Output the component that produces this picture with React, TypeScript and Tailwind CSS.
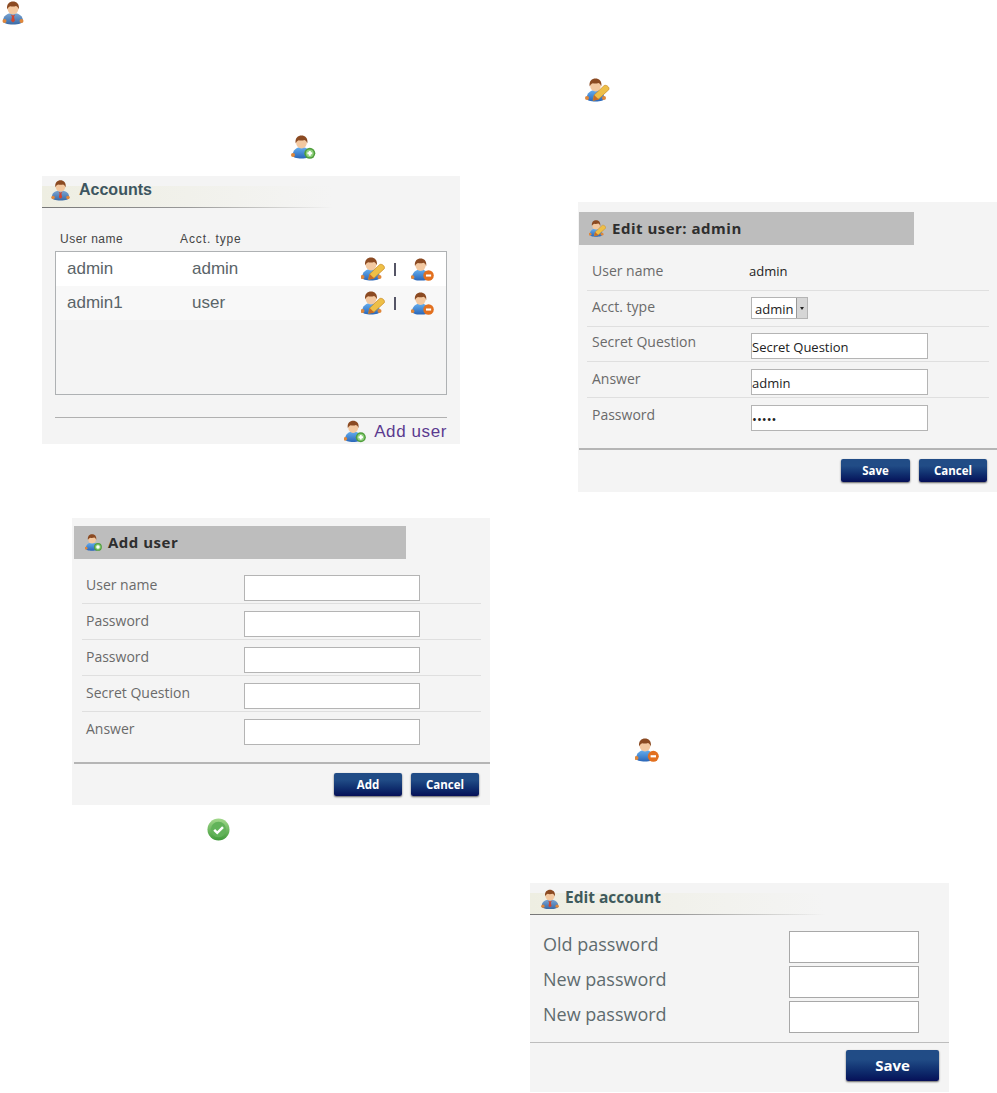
import React from "react";

type Kind = "suit" | "add" | "del" | "edit";

function UserIcon({ kind, className }: { kind: Kind; className: string }) {
  const gid = `body-${kind}`;
  const suit = kind === "suit";
  const hx = suit ? 12 : 10;
  return (
    <svg viewBox="0 0 24 24" className={className}>
      <defs>
        <linearGradient id={gid} x1="0" y1="0" x2="0" y2="1">
          <stop offset="0" stopColor={suit ? "#7ba6d4" : "#66b0f0"} />
          <stop offset="1" stopColor={suit ? "#3a6aa6" : "#2a66b8"} />
        </linearGradient>
      </defs>
      {suit ? (
        <path d="M2 20C2 15 6 12 12 12s10 3 10 8c0 2-4 3.500-10 3.500S2 22 2 20z" fill={`url(#${gid})`} />
      ) : (
        <path d="M1 20c.5-5 4-8 9-8s8.500 3 9 8c0 2.500-4 3.500-9 3.500S1 22.500 1 20z" fill={`url(#${gid})`} />
      )}
      <circle cx={hx - 8.500} cy="20" r="2" fill="#e0873a" />
      <circle cx={hx + 8.500} cy="20" r="2" fill="#e0873a" />
      <ellipse cx={hx} cy="7.500" rx="5.400" ry="6" fill="#f3c8a0" />
      <path
        d="M-5.800 8.500C-6.800 2.800-3.400.4 0 .4s6.800 2.400 5.800 8.100c-.5-2-1.500-3.100-2.800-3.500-1.900.7-4.200.7-5.700.2-1.500.7-2.600 1.600-3.100 3.300z"
        transform={`translate(${hx} 0)`}
        fill="#8b4a22"
      />
      {suit && <path d="M9.800 13.500l2.200 1 2.200-1-1.200 2.300.9 4-1.900 1.600-1.900-1.600.9-4z" fill="#d2452f" />}
      {kind === "add" && (
        <g>
          <circle cx="18.300" cy="18.300" r="5.500" fill="#4f9e3c" />
          <circle cx="18.300" cy="18.300" r="3.900" fill="#8fd07c" />
          <path d="M15.900 18.300h4.800M18.300 15.900v4.800" stroke="#fff" strokeWidth="2" />
        </g>
      )}
      {kind === "del" && (
        <g>
          <circle cx="18.300" cy="18.300" r="5.500" fill="#e2701f" />
          <path d="M15.600 18.300h5.400" stroke="#fff" strokeWidth="2.200" />
        </g>
      )}
      {kind === "edit" && (
        <g>
          <path d="M7.500 22.500l1.200-5.500 9.800-9.300c1.800-1.500 6 1.300 4.800 4l-9.800 9z" fill="#eebf47" stroke="#c98a25" strokeWidth="0.700" />
          <path d="M7.500 22.500l1.200-5.500 4.800 4.700z" fill="#c76b26" />
        </g>
      )}
    </svg>
  );
}

function CheckIcon() {
  return (
    <svg viewBox="0 0 24 24" className="w-[23px] h-[23px] block">
      <defs>
        <linearGradient id="okg" x1="0" y1="0" x2="0" y2="1">
          <stop offset="0" stopColor="#a3d98c" />
          <stop offset="1" stopColor="#3f9a3a" />
        </linearGradient>
      </defs>
      <circle cx="12" cy="12" r="11.500" fill="url(#okg)" />
      <circle cx="12" cy="12" r="8" fill="#62b35a" />
      <path d="M7.500 12.300l3.200 3.200 6-6" fill="none" stroke="#fff" strokeWidth="2.600" />
    </svg>
  );
}

function NavyButton({ label, className }: { label: string; className: string }) {
  return (
    <button className={`rounded-[2px] bg-gradient-to-b from-[#214c86] from-30% to-[#070f58] text-white font-bold shadow-[0_1px_2px_rgba(0,0,0,0.6)] ${className}`}>
      {label}
    </button>
  );
}

function GrayHeader({ kind, title, className }: { kind: Kind; title: string; className: string }) {
  return (
    <div className={`h-[33px] bg-[#bdbdbd] flex items-center ${className}`}>
      <UserIcon kind={kind} className="w-[17px] h-[17px] shrink-0" />
      <span className="ml-[6px] text-[15px] font-bold text-[#2e2e2e] tracking-[0.5px]">{title}</span>
    </div>
  );
}

function GlossHeader({ title, heightClass, lineClass, iconClass, textClass }: { title: string; heightClass: string; lineClass: string; iconClass: string; textClass: string }) {
  return (
    <div className={`relative flex items-center ${heightClass}`}>
      <div className={`absolute left-0 bottom-0 top-[10px] bg-gradient-to-r from-[#eeeee2] to-transparent ${lineClass}`} />
      <div className={`absolute left-0 bottom-0 h-px bg-gradient-to-r from-[#777] via-[#999] to-transparent ${lineClass}`} />
      <UserIcon kind="suit" className={`relative shrink-0 ${iconClass}`} />
      <span className={`relative font-bold text-[#3d5560] ${textClass}`}>{title}</span>
    </div>
  );
}

function FormRow({ label, children, last, height, inset }: { label: string; children: React.ReactNode; last?: boolean; height: string; inset: string }) {
  return (
    <div className={`flex items-start ${height} ${last ? "" : "border-b border-[#dfdfdf]"}`}>
      <div className={`${inset} mt-[7px] leading-5 text-[14px] text-[#6a6a6a]`}>{label}</div>
      {children}
    </div>
  );
}

const field = "block h-[26px] bg-white border border-[#b4b4b4] text-[13px] text-[#222] px-0 pt-[2px] outline-none";

function AccountRow({ name, type, bg }: { name: string; type: string; bg: string }) {
  return (
    <div className={`flex items-center h-[34px] ${bg} text-[17px] text-[#5a6468] font-['Liberation_Sans',sans-serif]`}>
      <span className="ml-[11px] w-[125px]">{name}</span>
      <span className="w-[169px]">{type}</span>
      <UserIcon kind="edit" className="w-[24px] h-[24px]" />
      <span className="ml-[9px] w-[1.5px] h-[13px] bg-[#556]" />
      <UserIcon kind="del" className="ml-[15px] w-[23px] h-[23px]" />
    </div>
  );
}

export default function App() {
  return (
    <div className="w-[997px] h-[1093px] bg-white flex overflow-hidden font-['Open_Sans',sans-serif]">
      {/* left column */}
      <div className="w-[520px] shrink-0 flex flex-col items-start">
        <UserIcon kind="suit" className="ml-[1px] mt-[1px] w-[24px] h-[24px]" />
        <UserIcon kind="add" className="ml-[291px] mt-[110px] w-[25px] h-[24px]" />

        <section className="ml-[42px] mt-[17px] w-[418px] h-[268px] bg-[#f4f4f4] flex flex-col">
          <GlossHeader
            title="Accounts"
            heightClass="h-[32px] shrink-0"
            lineClass="w-[291px]"
            iconClass="ml-[8px] w-[21px] h-[21px] -mt-[3px]"
            textClass="ml-[8px] text-[16px] -mt-[4px] font-['Liberation_Sans',sans-serif]"
          />
          <div className="flex mt-[23px] ml-[18px] text-[12px] tracking-[0.5px] text-[#444] leading-4 font-['Liberation_Sans',sans-serif]">
            <span className="w-[120px]">User name</span>
            <span className="tracking-[0.9px]">Acct. type</span>
          </div>
          <div className="ml-[13px] mt-[4px] w-[392px] h-[144px] border border-[#aeb1b3] p-0">
            <AccountRow name="admin" type="admin" bg="bg-white" />
            <AccountRow name="admin1" type="user" bg="bg-[#f8f8f8]" />
          </div>
          <div className="ml-[13px] mt-[22px] w-[392px] border-t border-[#b0b0b0] flex items-center justify-end pt-[1px]">
            <UserIcon kind="add" className="w-[22px] h-[23px]" />
            <span className="ml-[8px] text-[17px] text-[#5b3a8f] tracking-[0.6px] font-['Liberation_Sans',sans-serif]">Add user</span>
          </div>
        </section>

        <section className="ml-[72px] mt-[74px] w-[418px] h-[287px] bg-[#f4f4f4] flex flex-col pt-[8px]">
          <GrayHeader kind="add" title="Add user" className="ml-[2px] w-[332px] pl-[11px]" />
          <div className="ml-[10px] mt-[9px] w-[399px]">
            {["User name", "Password", "Password", "Secret Question", "Answer"].map((label, i) => (
              <FormRow key={i} label={label} last={i === 4} height="h-[36px]" inset="ml-[4px] w-[158px]">
                <input type="text" aria-label={label} className={`${field} w-[176px] mt-[7px]`} />
              </FormRow>
            ))}
          </div>
          <div className="ml-[2px] mt-[14px] border-t-2 border-[#b5b5b5] flex justify-end gap-[9px] pt-[9px] pr-[11px]">
            <NavyButton label="Add" className="w-[68px] h-[23px] text-[11.5px]" />
            <NavyButton label="Cancel" className="w-[68px] h-[23px] text-[11.5px]" />
          </div>
        </section>

        <div className="ml-[207px] mt-[13px]">
          <CheckIcon />
        </div>
      </div>

      {/* right column */}
      <div className="flex-1 flex flex-col items-start">
        <UserIcon kind="edit" className="ml-[65px] mt-[78px] w-[25px] h-[24px]" />

        <section className="ml-[58px] mt-[100px] w-[419px] h-[290px] bg-[#f4f4f4] flex flex-col pt-[10px]">
          <GrayHeader kind="edit" title="Edit user: admin" className="ml-[1px] w-[335px] pl-[10px]" />
          <div className="ml-[9px] mt-[10px] w-[402px]">
            <FormRow label="User name" height="h-[36px]" inset="ml-[5px] w-[157px] -translate-y-px">
              <span className="mt-[6px] leading-5 text-[13px] text-[#222]">admin</span>
            </FormRow>
            <FormRow label="Acct. type" height="h-[36px]" inset="ml-[5px] w-[159px] -translate-y-px">
              <div className="mt-[6px] flex items-stretch w-[57px] h-[22px] bg-white border border-[#b4b4b4]">
                <span className="flex-1 pl-[3px] text-[13px] leading-[22px] text-[#222]">admin</span>
                <span className="w-[11px] bg-[#d6d6d6] border-l border-[#999] flex items-center justify-center">
                  <span className="w-0 h-0 border-x-[2px] border-x-transparent border-t-[3px] border-t-[#222]" />
                </span>
              </div>
            </FormRow>
            <FormRow label="Secret Question" height="h-[35px]" inset="ml-[5px] w-[159px] -translate-y-[2px]">
              <input type="text" defaultValue="Secret Question" aria-label="Secret Question" className={`${field} w-[177px] mt-[6px]`} />
            </FormRow>
            <FormRow label="Answer" height="h-[36px]" inset="ml-[5px] w-[159px]">
              <input type="text" defaultValue="admin" aria-label="Answer" className={`${field} w-[177px] mt-[7px]`} />
            </FormRow>
            <FormRow label="Password" last height="h-[36px]" inset="ml-[5px] w-[159px]">
              <input type="password" defaultValue="admin" aria-label="Password" className={`${field} w-[177px] mt-[7px]`} />
            </FormRow>
          </div>
          <div className="ml-[1px] mt-[14px] border-t-2 border-[#b5b5b5] flex justify-end gap-[9px] pt-[9px] pr-[10px]">
            <NavyButton label="Save" className="w-[69px] h-[23px] text-[11.5px]" />
            <NavyButton label="Cancel" className="w-[68px] h-[23px] text-[11.5px]" />
          </div>
        </section>

        <UserIcon kind="del" className="ml-[115px] mt-[246px] w-[24px] h-[24px]" />

        <section className="ml-[10px] mt-[121px] w-[419px] h-[209px] bg-[#f4f4f4] flex flex-col">
          <GlossHeader
            title="Edit account"
            heightClass="h-[32px] shrink-0"
            lineClass="w-[295px]"
            iconClass="ml-[10px] w-[20px] h-[21px]"
            textClass="ml-[5px] text-[15.5px] -mt-[3px] text-[#3f5a5c]"
          />
          <div className="mt-[16px] ml-[13px] flex flex-col gap-[3px]">
            {["Old password", "New password", "New password"].map((label, i) => (
              <div key={i} className="flex items-start h-[32px]">
                <span className="w-[246px] text-[18px] leading-6 text-[#5f6b6e] mt-[1px]">{label}</span>
                <input type="password" aria-label={label} className="block w-[130px] h-[32px] bg-white border border-[#a8a8a8] outline-none" />
              </div>
            ))}
          </div>
          <div className="mt-[9px] border-t border-[#bdbdbd] flex justify-end pt-[7px] pr-[10px]">
            <NavyButton label="Save" className="w-[93px] h-[31px] text-[15px]" />
          </div>
        </section>
      </div>
    </div>
  );
}
